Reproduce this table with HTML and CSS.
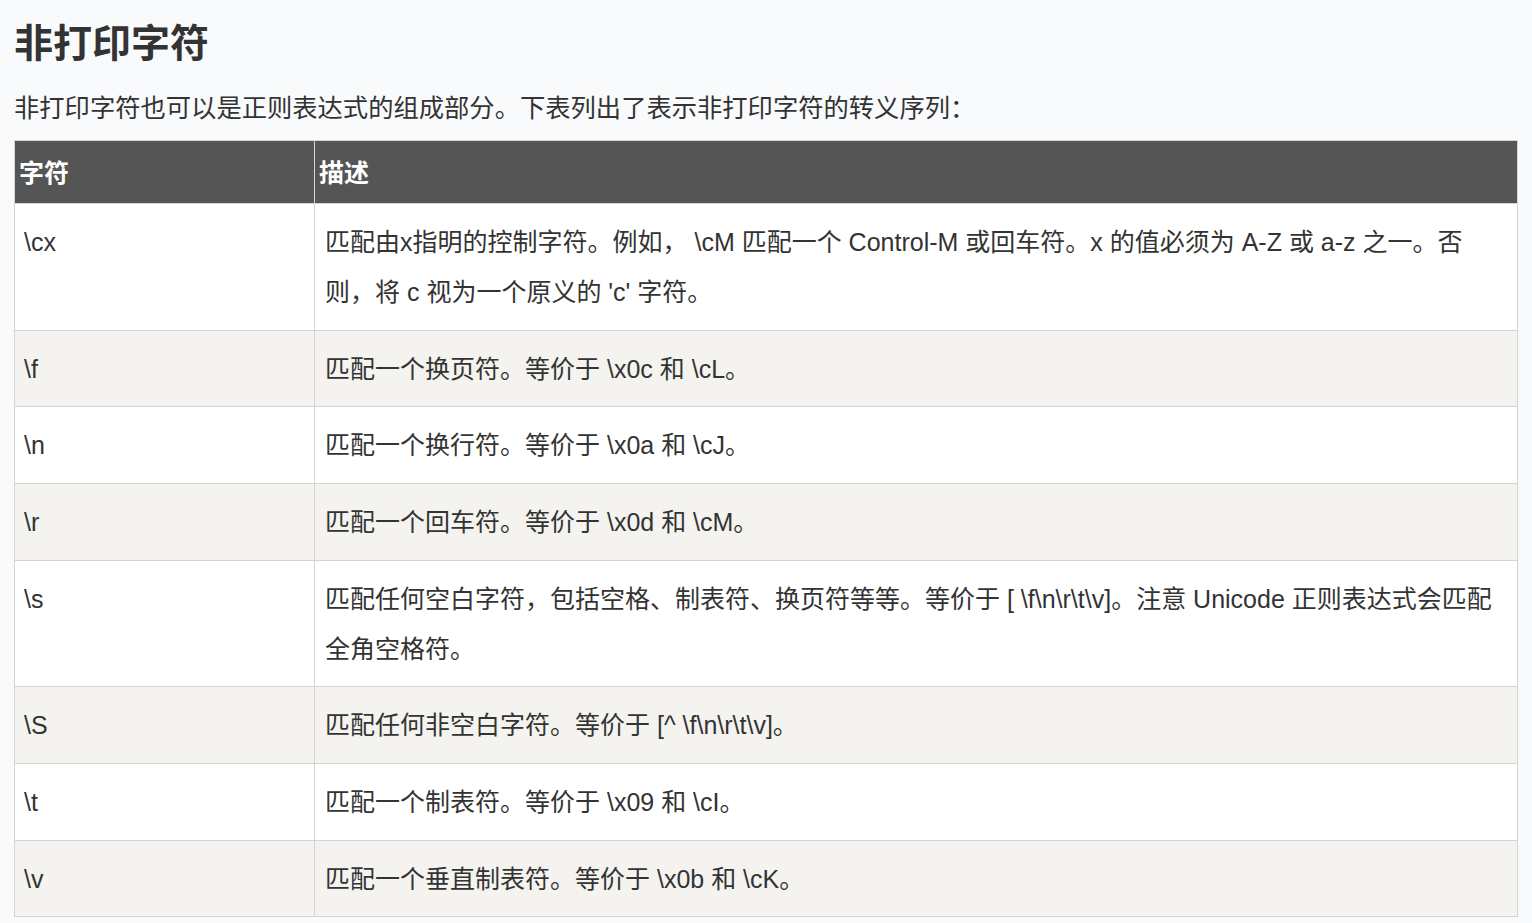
FILE: index.html
```html
<!DOCTYPE html>
<html lang="zh">
<head>
<meta charset="utf-8">
<title>非打印字符</title>
<link rel="stylesheet" href="styles.css">
</head>
<body>
<div class="article">
  <h2 class="title">非打印字符</h2>
  <p class="intro">非打印字符也可以是正则表达式的组成部分。下表列出了表示非打印字符的转义序列：</p>
  <table class="reference">
    <thead>
      <tr><th class="c1">字符</th><th>描述</th></tr>
    </thead>
    <tbody>
      <tr><td>\cx</td><td>匹配由x指明的控制字符。例如， \cM 匹配一个 Control-M 或回车符。x 的值必须为 A-Z 或 a-z 之一。否则，将 c 视为一个原义的 'c' 字符。</td></tr>
      <tr><td>\f</td><td>匹配一个换页符。等价于 \x0c 和 \cL。</td></tr>
      <tr><td>\n</td><td>匹配一个换行符。等价于 \x0a 和 \cJ。</td></tr>
      <tr><td>\r</td><td>匹配一个回车符。等价于 \x0d 和 \cM。</td></tr>
      <tr><td>\s</td><td>匹配任何空白字符，包括空格、制表符、换页符等等。等价于 [ \f\n\r\t\v]。注意 Unicode 正则表达式会匹配全角空格符。</td></tr>
      <tr><td>\S</td><td>匹配任何非空白字符。等价于 [^ \f\n\r\t\v]。</td></tr>
      <tr><td>\t</td><td>匹配一个制表符。等价于 \x09 和 \cI。</td></tr>
      <tr><td>\v</td><td>匹配一个垂直制表符。等价于 \x0b 和 \cK。</td></tr>
    </tbody>
  </table>
</div>
</body>
</html>
```

FILE: styles.css
```css
html, body {
  margin: 0;
  padding: 0;
  background: #f9fafc;
}
body {
  font-family: "Liberation Sans", Arial, "Noto Sans CJK SC", sans-serif;
  color: #333;
}
.article {
  padding: 18px 14px 0 14px;
}
.title {
  margin: 0;
  font-size: 39px;
  line-height: 52px;
  font-weight: bold;
  color: #333;
}
.intro {
  margin: 16px 0 10px 0;
  font-size: 25.3px;
  line-height: 44px;
}
.reference {
  width: 1504px;
  border-collapse: collapse;
  border: 1px solid #d4d4d4;
  font-size: 25px;
}
.reference th {
  background: #555555;
  color: #fff;
  font-weight: bold;
  text-align: left;
  padding: 7px 4px 5px 4px;
  line-height: 50px;
  border: 1px solid #d4d4d4;
}
.reference th.c1 {
  width: 291px;
}
.reference td {
  padding: 13px 10px 12.67px 9px;
  line-height: 50px;
  vertical-align: top;
  border: 1px solid #d4d4d4;
  background: #fff;
}
.reference td + td {
  padding-left: 10px;
  padding-right: 12px;
}
.reference tbody tr:nth-child(even) td {
  background: #f4f3ef;
}
```
